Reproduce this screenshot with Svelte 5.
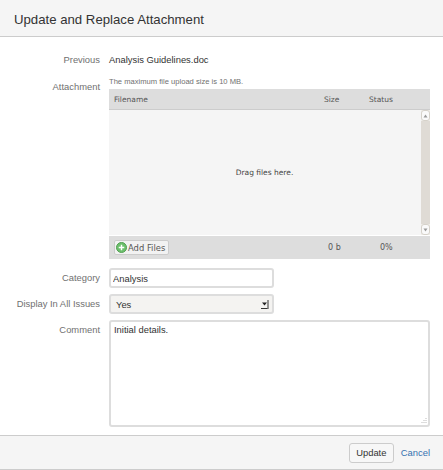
<script>
	let category = 'Analysis';
	let comment = 'Initial details.';
</script>

<div class="dialog">
	<header><h2>Update and Replace Attachment</h2></header>

	<form class="content">
		<div class="row previous">
			<span class="label">Previous</span>
			<span class="value">Analysis Guidelines.doc</span>
		</div>

		<div class="row attachment">
			<span class="label">Attachment</span>
			<div class="field">
				<p class="hint">The maximum file upload size is 10 MB.</p>
				<div class="uploader">
					<div class="up-head">
						<span class="c-name">Filename</span>
						<span class="c-size">Size</span>
						<span class="c-status">Status</span>
					</div>
					<div class="drop">
						<span class="drag">Drag files here.</span>
						<div class="scrollbar">
							<span class="arrow">
								<svg width="5" height="4" viewBox="0 0 5 4"><path d="M2.5 .5 4.5 3.5H.5z" fill="#999" /></svg>
							</span>
							<span class="track"></span>
							<span class="arrow">
								<svg width="5" height="4" viewBox="0 0 5 4"><path d="M2.5 3.5 4.5 .5H.5z" fill="#999" /></svg>
							</span>
						</div>
					</div>
					<div class="up-foot">
						<span class="c-name">
							<button type="button" class="add">
								<svg width="11" height="11" viewBox="0 0 12 12">
									<circle cx="6" cy="6" r="5.5" fill="#6cbf6c" stroke="#4c9a4c" />
									<path d="M6 3v6M3 6h6" stroke="#fff" stroke-width="1.6" />
								</svg>
								Add Files
							</button>
						</span>
						<span class="c-size foot">0 b</span>
						<span class="c-status foot">0%</span>
					</div>
				</div>
			</div>
		</div>

		<div class="row category">
			<label class="label" for="category">Category</label>
			<input id="category" type="text" bind:value={category} />
		</div>

		<div class="row display">
			<label class="label" for="display">Display In All Issues</label>
			<div class="select" id="display">
				<span>Yes</span>
				<svg width="9" height="11" viewBox="0 0 9 11">
					<path d="M2 3.5h5L4.5 6.5z" fill="#222" />
					<path d="M1 9.5h6.5M8 1v9" stroke="#333" fill="none" />
				</svg>
			</div>
		</div>

		<div class="row comment">
			<label class="label" for="comment">Comment</label>
			<div class="area">
				<textarea id="comment" bind:value={comment}></textarea>
				<svg class="grip" width="7" height="7" viewBox="0 0 7 7">
					<path d="M6 1v1M4 3v1M6 3v1M2 5v1M4 5v1M6 5v1" stroke="#bbb" fill="none" />
				</svg>
			</div>
		</div>
	</form>

	<footer>
		<button type="button" class="update">Update</button>
		<a href="#cancel">Cancel</a>
	</footer>
</div>

<style>
	:global(body) {
		margin: 0;
		background: #fff;
	}

	.dialog {
		width: 443px;
		height: 470px;
		display: flex;
		flex-direction: column;
		font-family: 'Liberation Sans', Arial, sans-serif;
		font-size: 9.4px;
		color: #333;
		overflow: hidden;
	}

	header {
		height: 37px;
		flex: none;
		box-sizing: border-box;
		background: #f5f5f5;
		border-bottom: 1px solid #ccc;
		padding-left: 14px;
	}

	h2 {
		margin: 0;
		font-size: 13.2px;
		font-weight: 400;
		line-height: 39px;
		color: #333;
	}

	.content {
		flex: 1;
		padding-top: 16px;
	}

	.row {
		display: flex;
		align-items: flex-start;
		gap: 9px;
	}

	.label {
		width: 100px;
		flex: none;
		text-align: right;
		color: #707070;
		font-size: 9.4px;
		line-height: 14px;
	}

	.previous {
		height: 14px;
		margin-bottom: 13px;
	}

	.value {
		font-size: 9.4px;
		line-height: 14px;
		color: #333;
	}

	.field {
		width: 321px;
	}

	.hint {
		margin: -3px 0 0;
		height: 12px;
		font-size: 7.6px;
		line-height: 10px;
		color: #707070;
	}

	.uploader {
		font-family: 'DejaVu Sans', Verdana, sans-serif;
		font-size: 7.5px;
		color: #555;
	}

	.up-head,
	.up-foot {
		display: flex;
		align-items: center;
		background: #ddd;
	}

	.up-head {
		height: 21px;
		border-bottom: 1px solid #ccc;
		box-sizing: border-box;
	}

	.up-foot {
		height: 24px;
		border-top: 1px solid #fff;
		box-sizing: border-box;
	}

	.c-name {
		width: 215px;
		padding-left: 5px;
		box-sizing: border-box;
	}

	.c-size {
		width: 45px;
	}

	.c-status {
		flex: 1;
	}

	.foot {
		font-size: 8px;
		padding-left: 4px;
		box-sizing: border-box;
	}

	.c-status.foot {
		padding-left: 11px;
	}

	.drop {
		height: 125px;
		box-sizing: border-box;
		position: relative;
		background: #f5f5f5;
		display: flex;
		align-items: center;
		justify-content: center;
		padding-right: 10px;
	}

	.drag {
		color: #444;
		font-size: 7.5px;
	}

	.scrollbar {
		position: absolute;
		top: 0;
		right: 0;
		bottom: 0;
		width: 9px;
		display: flex;
		flex-direction: column;
		background: #f0eeea;
	}

	.arrow {
		height: 11px;
		flex: none;
		box-sizing: border-box;
		border: 1px solid #d6d2ca;
		border-radius: 3px;
		background: #fafafa;
		display: flex;
		align-items: center;
		justify-content: center;
	}

	.track {
		flex: 1;
		background: #dfdbd5;
	}

	.add {
		display: inline-flex;
		align-items: center;
		gap: 1px;
		width: 55px;
		height: 15px;
		padding: 0 0 0 1px;
		font-family: 'DejaVu Sans', Verdana, sans-serif;
		font-size: 8.4px;
		color: #555;
		background: #f2f2f2;
		border: 1px solid #ccc;
		border-radius: 2px;
		white-space: nowrap;
	}

	.category {
		margin-top: 9px;
	}

	.display,
	.comment {
		margin-top: 6px;
	}

	.category .label,
	.display .label,
	.comment .label {
		line-height: 20px;
	}

	input,
	.select {
		width: 165px;
		height: 20px;
		box-sizing: border-box;
		border: 2px solid #ddd;
		border-radius: 3px;
		font-family: 'Liberation Sans', Arial, sans-serif;
		font-size: 9.4px;
		color: #333;
		padding: 0 2px;
		margin: 0;
		outline: none;
	}

	.select {
		display: flex;
		align-items: center;
		justify-content: space-between;
		background: #f4f3f1;
		padding: 0 3px 0 5px;
	}

	.area {
		position: relative;
		width: 321px;
		height: 107px;
	}

	textarea {
		display: block;
		width: 100%;
		height: 100%;
		box-sizing: border-box;
		border: 2px solid #ddd;
		border-radius: 3px;
		font-family: 'Liberation Sans', Arial, sans-serif;
		font-size: 9.4px;
		line-height: 14px;
		color: #333;
		padding: 1px 3px;
		margin: 0;
		outline: none;
		resize: none;
	}

	.grip {
		position: absolute;
		right: 3px;
		bottom: 3px;
	}

	footer {
		height: 35px;
		flex: none;
		box-sizing: border-box;
		background: #f5f5f5;
		border-top: 1px solid #ccc;
		border-bottom: 1px solid #ccc;
		display: flex;
		align-items: center;
		justify-content: flex-end;
		gap: 7px;
		padding-right: 13px;
	}

	.update {
		height: 20px;
		width: 45px;
		padding: 0;
		font-family: 'Liberation Sans', Arial, sans-serif;
		font-size: 9.4px;
		color: #333;
		background: #f7f7f7;
		border: 1px solid #ccc;
		border-radius: 3px;
	}

	a {
		font-size: 9.4px;
		color: #3572b0;
		text-decoration: none;
	}
</style>
